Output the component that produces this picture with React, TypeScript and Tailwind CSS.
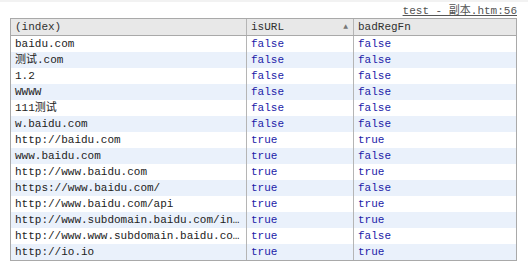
import React from 'react';

const rows: [string, boolean, boolean][] = [
  ['baidu.com', false, false],
  ['测试.com', false, false],
  ['1.2', false, false],
  ['WWWW', false, false],
  ['111测试', false, false],
  ['w.baidu.com', false, false],
  ['http://baidu.com', true, true],
  ['www.baidu.com', true, false],
  ['http://www.baidu.com', true, true],
  ['https://www.baidu.com/', true, false],
  ['http://www.baidu.com/api', true, true],
  ['http://www.subdomain.baidu.com/index.html', true, true],
  ['http://www.www.subdomain.baidu.com/', true, false],
  ['http://io.io', true, true],
];

export default function App() {
  return (
    <div
      className="w-[528px] h-[265px] bg-white overflow-hidden text-[11px] text-[#222]"
      style={{ fontFamily: '"Liberation Mono", "Noto Sans CJK SC", monospace' }}
    >
      <div className="h-[2px] bg-[#f2f2f2]" />
      <div className="flex justify-end pr-[11px] h-[16px] items-end">
        <a href="#" className="text-[#545454] underline leading-[13px]">
          test - 副本.htm:56
        </a>
      </div>
      <div className="ml-[10px] w-[507px] border border-[#a9a9a9]">
        <div className="flex h-[17px] bg-[#e8e8e8] border-b border-[#a9a9a9] text-[#303030] leading-[16px]">
          <div className="w-[236px] border-r border-[#b5b5b5] pl-[4px]">(index)</div>
          <div className="w-[107px] border-r border-[#b5b5b5] pl-[4px] flex items-center justify-between pr-[5px]">
            <span>isURL</span>
            <span className="text-[8px] text-[#777]">▲</span>
          </div>
          <div className="flex-1 pl-[4px]">badRegFn</div>
        </div>
        {rows.map(([k, a, b], i) => (
          <div
            key={i}
            className={`flex h-[16px] leading-[16px] ${i % 2 === 1 ? 'bg-[#eaf1fb]' : 'bg-white'}`}
          >
            <div className="w-[236px] border-r border-[#b5b5b5] pl-[4px] pr-[4px] truncate">{k}</div>
            <div className="w-[107px] border-r border-[#b5b5b5] pl-[4px] text-[#1c1ca8]">{String(a)}</div>
            <div className="flex-1 pl-[4px] text-[#1c1ca8]">{String(b)}</div>
          </div>
        ))}
      </div>
    </div>
  );
}
